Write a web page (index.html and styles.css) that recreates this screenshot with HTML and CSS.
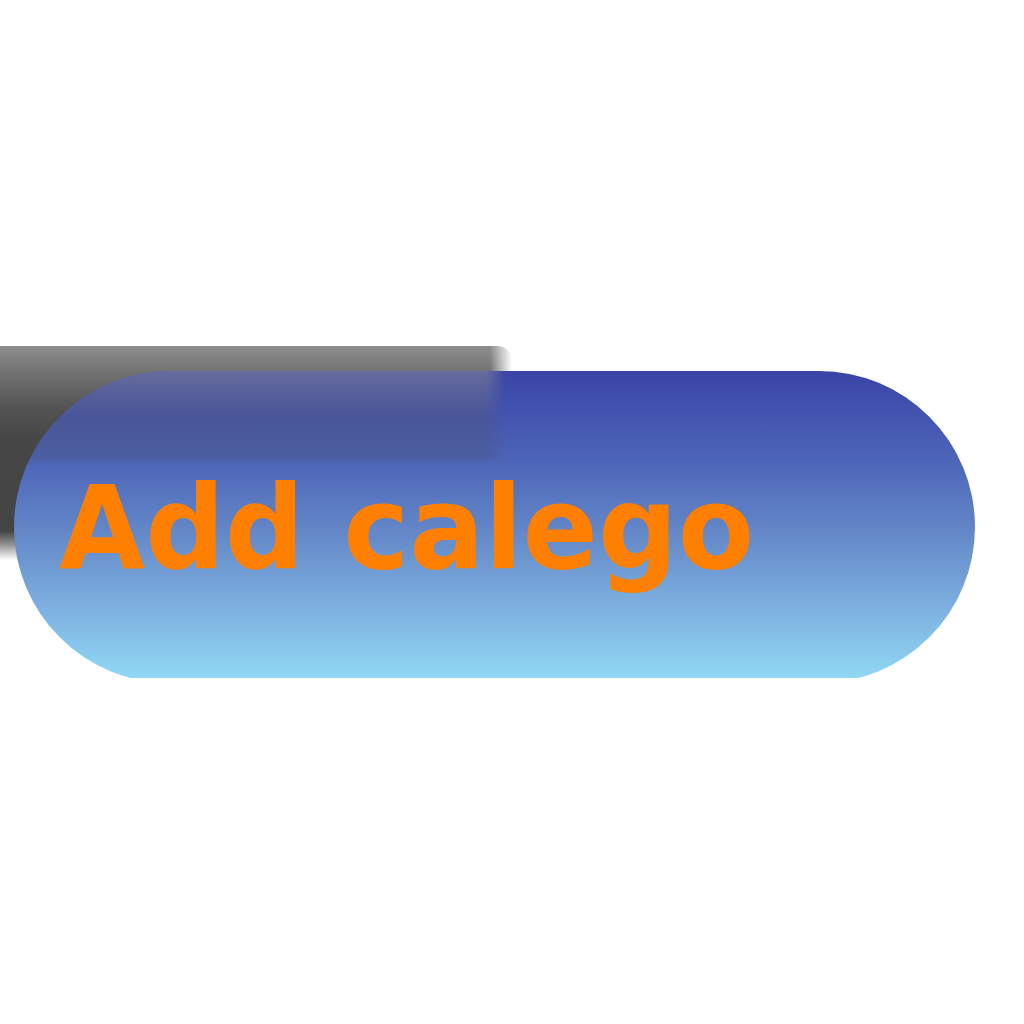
FILE: index.html
```html
<!DOCTYPE html>
<html>
<head>
<meta charset="utf-8">
<link rel="stylesheet" href="styles.css">
</head>
<body>
<div class="stage">
  <div class="shadow"></div>
  <div class="pill">
    <div class="pill-shape">
      <div class="shine"></div>
      <span class="label">Add calego</span>
    </div>
  </div>
</div>
</body>
</html>
```
FILE: styles.css
```css
html, body {
  margin: 0;
  padding: 0;
  background: #ffffff;
}
.stage {
  position: relative;
  width: 1024px;
  height: 1024px;
  overflow: hidden;
  padding-top: 371px;
  box-sizing: border-box;
}
.shadow {
  position: absolute;
  left: 0;
  top: 346px;
  width: 512px;
  height: 214px;
  border-top-right-radius: 14px;
  background: linear-gradient(to bottom,
    #8e8e8e 0px,
    #737373 25px,
    #555555 60px,
    #474747 90px,
    #444444 185px,
    rgba(68,68,68,0.6) 198px,
    rgba(68,68,68,0) 214px);
  -webkit-mask-image: linear-gradient(to right, #000 490px, rgba(0,0,0,0) 512px);
  mask-image: linear-gradient(to right, #000 490px, rgba(0,0,0,0) 512px);
}
.pill {
  position: relative;
  margin-left: 14px;
  width: 961px;
  height: 307px;
  overflow: hidden;
}
.pill-shape {
  position: relative;
  height: 312px;
  border-radius: 156px;
  overflow: hidden;
  background: linear-gradient(to bottom, #3a44a7 0%, #4c64b8 28%, #6488c8 52%, #7fb4e2 78%, #92dbf5 100%);
  box-sizing: border-box;
  padding-top: 100px;
  padding-left: 45px;
}
.shine {
  position: absolute;
  left: -20px;
  top: -10px;
  width: 512px;
  height: 104px;
  background: linear-gradient(to bottom,
    rgba(160,158,160,0.55) 0px,
    rgba(140,140,140,0.45) 20px,
    rgba(90,90,95,0.28) 55px,
    rgba(74,74,80,0.22) 95px,
    rgba(74,74,80,0.0) 104px);
  -webkit-mask-image: linear-gradient(to right, #000 492px, rgba(0,0,0,0) 512px);
  mask-image: linear-gradient(to right, #000 492px, rgba(0,0,0,0) 512px);
}
.label {
  position: relative;
  display: inline-block;
  font-family: "DejaVu Sans", sans-serif;
  font-weight: bold;
  font-size: 115px;
  line-height: 1;
  color: #ff8000;
  white-space: nowrap;
  transform: scaleX(0.968);
  transform-origin: left center;
}
```
